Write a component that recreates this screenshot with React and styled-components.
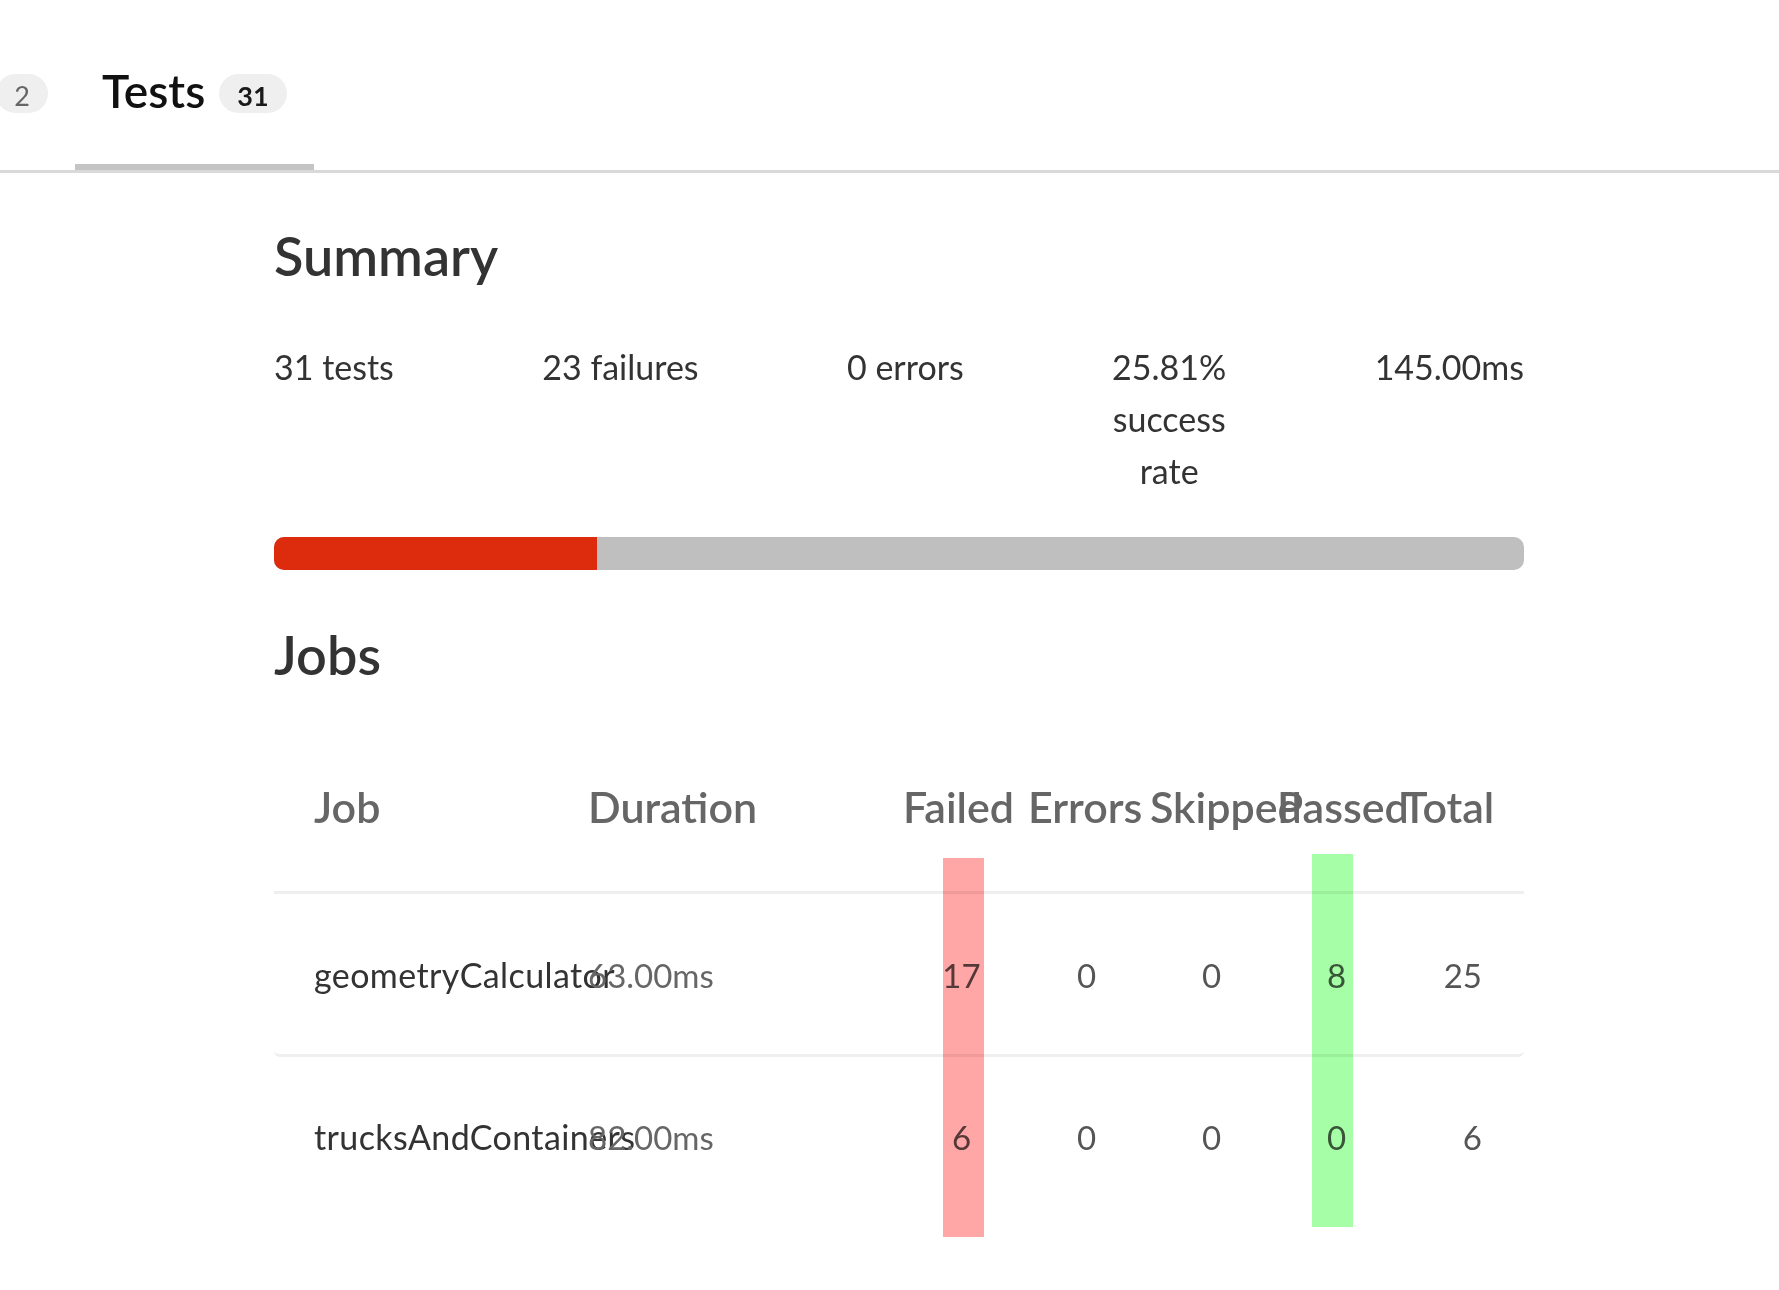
import React from "react";
import styled, { createGlobalStyle } from "styled-components";

const GlobalStyle = createGlobalStyle`
  html, body {
    margin: 0;
    padding: 0;
    background: #ffffff;
  }
  body {
    font-family: Lato, "Open Sans", "Noto Sans", sans-serif;
    color: #333333;
  }
  * { box-sizing: border-box; }
`;

const Page = styled.div`
  width: 100%;
  min-height: 1290px;
  overflow: hidden;
`;

/* ---------- Tabs ---------- */
const TabBar = styled.nav`
  display: flex;
  align-items: stretch;
  border-bottom: 3px solid #d9d9d9;
  height: 173px;
`;

const ScrolledOff = styled.div`
  width: 75px;
  flex: 0 0 75px;
  display: flex;
  justify-content: flex-end;
  overflow: hidden;
`;

const Tab = styled.div`
  display: flex;
  align-items: center;
  gap: 14px;
  flex: 0 0 auto;
  padding: 17px 27px 0;
  height: 170px;
  white-space: nowrap;
  box-shadow: ${(p) => (p.$active ? "inset 0 -6px 0 #c4c4c4" : "none")};
`;

const TabTitle = styled.span`
  font-size: 46px;
  font-weight: ${(p) => (p.$active ? 600 : 400)};
  color: ${(p) => (p.$active ? "#111111" : "#666666")};
  line-height: 1.2;
  padding-bottom: 6px;
`;

const Badge = styled.span`
  display: inline-flex;
  align-items: center;
  justify-content: center;
  height: 39px;
  min-width: 52px;
  padding: 4px 18px 0;
  border-radius: 20px;
  background: #efefef;
  font-size: 27px;
  font-weight: ${(p) => (p.$active ? 700 : 400)};
  color: ${(p) => (p.$active ? "#1a1a1a" : "#666666")};
`;

/* ---------- Content ---------- */
const Content = styled.main`
  width: 1250px;
  margin-left: 274px;
`;

const Heading = styled.h2`
  margin: ${(p) => p.$top}px 0 0;
  font-size: 54px;
  line-height: 64px;
  font-weight: 600;
  color: #333333;
`;

const StatsRow = styled.div`
  display: flex;
  justify-content: space-between;
  align-items: flex-start;
  margin-top: 53px;
`;

const Stat = styled.div`
  font-size: 34px;
  line-height: 52px;
  color: #333333;
  text-align: center;
  white-space: ${(p) => (p.$wrap ? "normal" : "nowrap")};
  width: ${(p) => (p.$wrap ? "min-content" : "auto")};
`;

const Progress = styled.div`
  margin-top: 40px;
  height: 33px;
  border-radius: 10px;
  background: #bfbfbf;
  overflow: hidden;
  display: flex;
`;

const ProgressFill = styled.div`
  height: 100%;
  background: #dd2b0e;
`;

/* ---------- Table ---------- */
const TableWrap = styled.div`
  position: relative;
  margin-top: 38px;
`;

const Row = styled.div`
  display: grid;
  grid-template-columns: 314px 311px 125px 125px 125px 125px 125px;
  align-items: center;
  padding: ${(p) => p.$pad};
  border-bottom: ${(p) => (p.$border ? "3px solid #efefef" : "none")};
  border-radius: ${(p) => (p.$round ? "0 0 6px 6px" : "0")};
`;

const HeadCell = styled.div`
  font-size: 43px;
  line-height: 52px;
  font-weight: 600;
  color: #666666;
  white-space: nowrap;
  padding-left: ${(p) => p.$pl || 0}px;
`;

const JobCell = styled.div`
  font-size: 34px;
  line-height: 40px;
  letter-spacing: 0.4px;
  color: #333333;
  padding-left: 40px;
  white-space: nowrap;
`;

const DurationCell = styled.div`
  font-size: 33px;
  line-height: 40px;
  color: #666666;
  white-space: nowrap;
`;

const NumCell = styled.div`
  font-size: 33px;
  line-height: 40px;
  color: #555555;
  text-align: ${(p) => (p.$right ? "right" : "center")};
  padding-right: ${(p) => (p.$right ? 42 : 0)}px;
`;

const ColumnBar = styled.div`
  position: absolute;
  width: 41px;
  pointer-events: none;
  background: ${(p) => p.$color};
  mix-blend-mode: multiply;
`;

const jobs = [
  { name: "geometryCalculator", duration: "63.00ms", failed: 17, errors: 0, skipped: 0, passed: 8, total: 25 },
  { name: "trucksAndContainers", duration: "82.00ms", failed: 6, errors: 0, skipped: 0, passed: 0, total: 6 },
];

export default function App() {
  const successRate = 25.81;
  return (
    <Page>
      <GlobalStyle />
      <TabBar>
        <ScrolledOff>
          <Tab>
            <TabTitle>Jobs</TabTitle>
            <Badge>2</Badge>
          </Tab>
        </ScrolledOff>
        <Tab $active>
          <TabTitle $active>Tests</TabTitle>
          <Badge $active>31</Badge>
        </Tab>
      </TabBar>

      <Content>
        <Heading $top={51}>Summary</Heading>
        <StatsRow>
          <Stat>31 tests</Stat>
          <Stat>23 failures</Stat>
          <Stat>0 errors</Stat>
          <Stat $wrap>25.81% success rate</Stat>
          <Stat>145.00ms</Stat>
        </StatsRow>
        <Progress>
          <ProgressFill style={{ width: `${successRate}%` }} />
        </Progress>

        <Heading $top={53}>Jobs</Heading>

        <TableWrap>
          <Row $pad="56px 0 58px" $border>
            <HeadCell $pl={40}>Job</HeadCell>
            <HeadCell>Duration</HeadCell>
            <HeadCell $pl={4}>Failed</HeadCell>
            <HeadCell $pl={4}>Errors</HeadCell>
            <HeadCell $pl={1}>Skipped</HeadCell>
            <HeadCell $pl={3}>Passed</HeadCell>
            <HeadCell $pl={3}>Total</HeadCell>
          </Row>
          {jobs.map((j, i) => (
            <Row
              key={j.name}
              $pad={i === 0 ? "61px 0 59px" : "60px 0 60px"}
              $border={i === 0}
              $round={i === 0}
            >
              <JobCell>{j.name}</JobCell>
              <DurationCell>{j.duration}</DurationCell>
              <NumCell>{j.failed}</NumCell>
              <NumCell>{j.errors}</NumCell>
              <NumCell>{j.skipped}</NumCell>
              <NumCell>{j.passed}</NumCell>
              <NumCell $right>{j.total}</NumCell>
            </Row>
          ))}
          <ColumnBar $color="#ffa6a6" style={{ left: 669, top: 133, height: 379 }} />
          <ColumnBar $color="#a6ffa6" style={{ left: 1038, top: 129, height: 373 }} />
        </TableWrap>
      </Content>
    </Page>
  );
}
